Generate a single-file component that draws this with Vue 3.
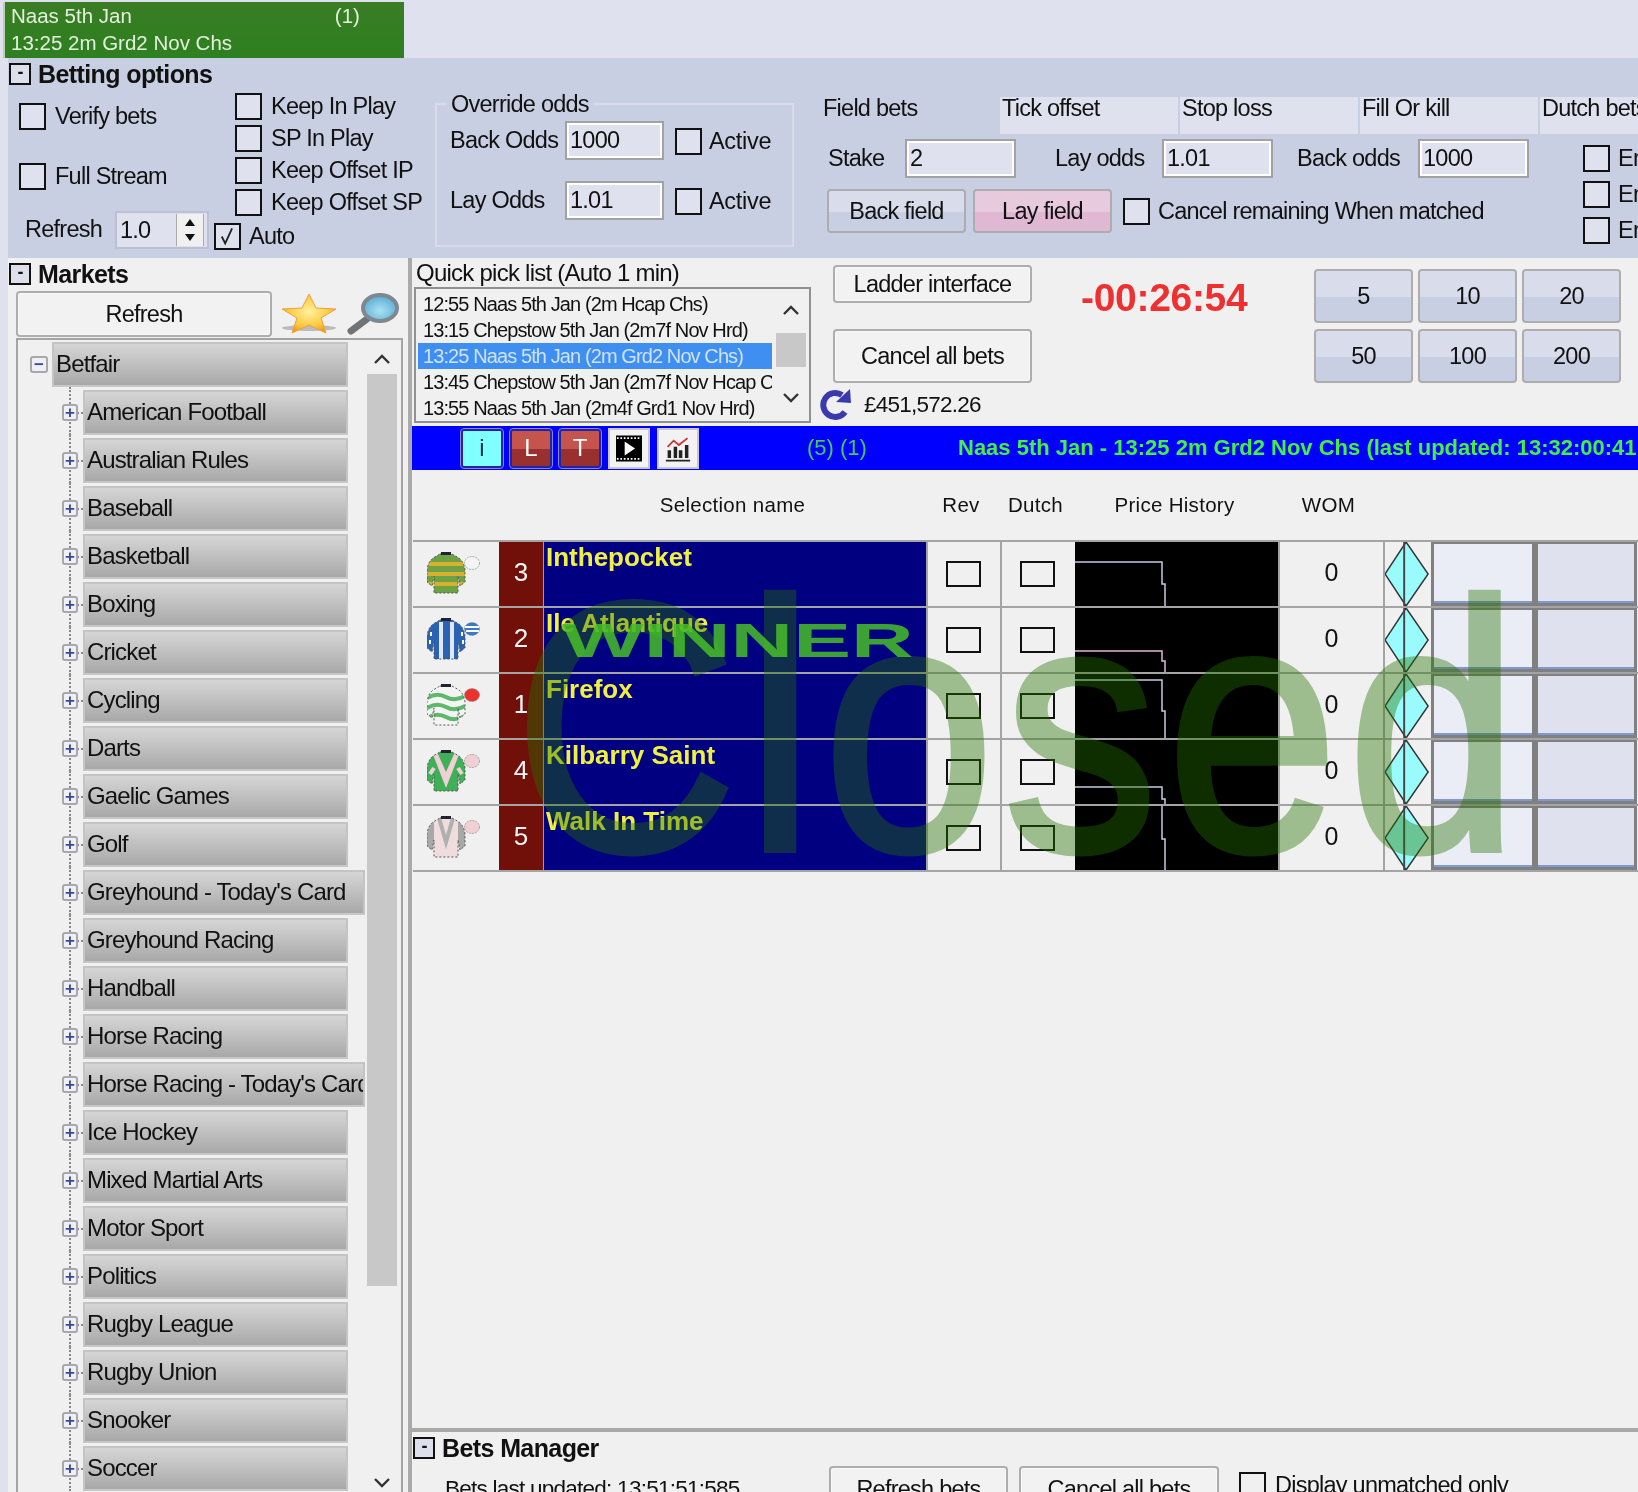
<template>
  <div class="page">
    <div class="tabstrip">
      <div class="market-tab">
        <div class="tab-line"><span>Naas 5th Jan</span><span class="tab-count">(1)</span></div>
        <div class="tab-line">13:25 2m Grd2 Nov Chs</div>
      </div>
    </div>

    <div class="main">
      <section class="options">
        <div class="sec-head"><span class="collapse">-</span><h2>Betting options</h2></div>
        <div class="opt-body">
          <div class="col-a">
            <label class="chk verify"><span class="box"></span>Verify bets</label>
            <label class="chk stream"><span class="box"></span>Full Stream</label>
            <div class="refresh-row">
              <span class="refresh-label">Refresh</span>
              <div class="spinner">
                <span>1.0</span>
                <div class="spin-btns"><i class="up"></i><i class="down"></i></div>
              </div>
              <label class="chk auto"><span class="box ticked">
                <svg viewBox="0 0 20 20"><path d="M5 10 L8 16 L14 3" fill="none" stroke="#222" stroke-width="1.6" /></svg>
              </span>Auto</label>
            </div>
          </div>
          <div class="col-b">
            <label v-for="k in keepOptions" :key="k" class="chk"><span class="box"></span>{{ k }}</label>
          </div>
          <fieldset class="override">
            <legend>Override odds</legend>
            <div class="odds-grid">
              <span>Back Odds</span><input class="field" value="1000" readonly />
              <label class="chk"><span class="box"></span>Active</label>
              <span>Lay Odds</span><input class="field" value="1.01" readonly />
              <label class="chk"><span class="box"></span>Active</label>
            </div>
          </fieldset>
          <div class="tabs-area">
            <div class="tab-heads">
              <span class="thead first">Field bets</span>
              <span v-for="t in fieldTabs" :key="t" class="thead">{{ t }}</span>
            </div>
            <div class="tab-body">
              <div class="field-form">
                <div class="stake-row">
                  <span class="l-stake">Stake</span><input class="field" value="2" readonly />
                  <span class="l-lay">Lay odds</span><input class="field" value="1.01" readonly />
                  <span class="l-back">Back odds</span><input class="field" value="1000" readonly />
                </div>
                <div class="field-btns">
                  <button class="btn blue">Back field</button>
                  <button class="btn pink">Lay field</button>
                  <label class="chk"><span class="box"></span>Cancel remaining When matched</label>
                </div>
              </div>
              <div class="en-col">
                <label v-for="n in 3" :key="n" class="chk"><span class="box"></span>Enable</label>
              </div>
            </div>
          </div>
        </div>
      </section>

      <div class="lower">
        <aside class="markets">
          <div class="sec-head"><span class="collapse">-</span><h2>Markets</h2></div>
          <div class="refresh-bar">
            <button class="btn refresh-btn">Refresh</button>
            <svg class="star" viewBox="0 0 58 42">
              <defs>
                <radialGradient id="starFill" cx="50%" cy="45%" r="55%">
                  <stop offset="0" stop-color="#fff2a0" />
                  <stop offset="0.7" stop-color="#fbc93c" />
                  <stop offset="1" stop-color="#f09a20" />
                </radialGradient>
              </defs>
              <ellipse cx="29" cy="35" rx="27" ry="3" fill="#bbb" />
              <path d="M29 1 L36 15 L56 16 L41 25 L46 40 L29 32 L12 40 L17 25 L2 16 L22 15 Z" fill="url(#starFill)" stroke="#f0a040" stroke-width="1" />
            </svg>
            <svg class="glass" viewBox="0 0 54 42">
              <defs>
                <radialGradient id="lens" cx="50%" cy="60%" r="60%">
                  <stop offset="0" stop-color="#a8e4f4" />
                  <stop offset="1" stop-color="#5ba8d0" />
                </radialGradient>
              </defs>
              <path d="M4 38 L20 26" stroke="#6e7478" stroke-width="7" stroke-linecap="round" />
              <ellipse cx="33" cy="15" rx="17" ry="13" fill="url(#lens)" stroke="#7d8890" stroke-width="4" />
            </svg>
          </div>
          <div class="tree">
            <div class="tree-list">
              <div class="tree-root">
                <span class="node-toggle root-toggle">−</span>
                <div class="tree-item">Betfair</div>
              </div>
              <div v-for="m in marketItems" :key="m" class="tree-row">
                <span class="node-toggle">+</span>
                <div class="tree-item" :class="{ wide: m.includes('Today') }">{{ m }}</div>
              </div>
            </div>
            <div class="tree-scroll">
              <svg class="chev" viewBox="0 0 16 10"><path d="M1 9 L8 2 L15 9" fill="none" stroke="#333" stroke-width="2.4" /></svg>
              <div class="tree-thumb"></div>
              <svg class="chev" viewBox="0 0 16 10"><path d="M1 1 L8 8 L15 1" fill="none" stroke="#333" stroke-width="2.4" /></svg>
            </div>
          </div>
        </aside>

        <div class="work">
          <div class="work-top">
            <div class="quick">
              <div class="quick-label">Quick pick list (Auto 1 min)</div>
              <div class="quick-box">
                <ul>
                  <li v-for="(q, i) in quickPicks" :key="q" :class="{ selected: i === 2 }">{{ q }}</li>
                </ul>
                <div class="quick-scroll">
                  <svg class="chev" viewBox="0 0 16 10"><path d="M1 9 L8 2 L15 9" fill="none" stroke="#333" stroke-width="2.4" /></svg>
                  <div class="quick-thumb"></div>
                  <svg class="chev" viewBox="0 0 16 10"><path d="M1 1 L8 8 L15 1" fill="none" stroke="#333" stroke-width="2.4" /></svg>
                </div>
              </div>
            </div>
            <div class="actions">
              <button class="btn ladder">Ladder interface</button>
              <button class="btn cancel">Cancel all bets</button>
              <div class="balance">
                <svg viewBox="0 0 32 32" class="reload">
                  <path d="M25 23 A12 12 0 1 1 22 6" fill="none" stroke="#3a3aac" stroke-width="6" />
                  <path d="M16 13 L31 14 L30 0 Z" fill="#3a3aac" />
                </svg>
                <span>£451,572.26</span>
              </div>
            </div>
            <div class="timer">-00:26:54</div>
            <div class="stakes">
              <button v-for="s in stakes" :key="s" class="btn blue">{{ s }}</button>
            </div>
          </div>

          <div class="blue-bar">
            <button class="tool info">i</button>
            <button class="tool red">L</button>
            <button class="tool red">T</button>
            <span class="tool-img">
              <svg viewBox="0 0 30 30">
                <rect width="30" height="30" fill="#000" />
                <path d="M1 3 H29 M1 27 H29" stroke="#fff" stroke-width="2" stroke-dasharray="2 2" />
                <path d="M10 7 L22 15 L10 23 Z" fill="#fff" />
              </svg>
            </span>
            <span class="tool-img">
              <svg viewBox="0 0 30 30">
                <path d="M3 13 L10 6 L16 11 L26 3" fill="none" stroke="#d03030" stroke-width="2" />
                <path d="M5 26 V17 M12 26 V13 M18 26 V17 M25 26 V11" stroke="#222" stroke-width="4" />
                <path d="M1 29 H29" stroke="#222" stroke-width="2" />
              </svg>
            </span>
            <span class="counts">(5) (1)</span>
            <span class="bar-title">Naas 5th Jan - 13:25 2m Grd2 Nov Chs (last updated: 13:32:00:41</span>
          </div>

          <div class="table-head grid-cols">
            <span></span><span></span>
            <span>Selection name</span><span>Rev</span><span>Dutch</span><span>Price History</span><span>WOM</span>
          </div>

          <div class="runners">
            <div v-for="(r, i) in runners" :key="r.name" class="runner grid-cols">
              <div class="silk">
                <svg viewBox="0 0 54 44">
                  <clipPath :id="'jacket' + i">
                    <path :d="jacketPath" />
                  </clipPath>
                  <path :d="jacketPath" :fill="r.base" />
                  <g :clip-path="'url(#jacket' + i + ')'">
                    <path v-for="(m, j) in r.marks" :key="j" :d="m.d" :fill="m.fill || 'none'" :stroke="m.stroke || 'none'" stroke-width="4" />
                  </g>
                  <path :d="jacketPath" fill="none" stroke="#555" stroke-width="1" stroke-dasharray="2 2" />
                  <path d="M14 0 H24 V3 H14 Z" fill="#223" />
                  <ellipse cx="45" cy="11" rx="7.5" ry="6.5" :fill="r.cap" stroke="#888" stroke-width="0.7" stroke-dasharray="2 1" />
                  <path v-if="r.capStripe" d="M38 9 H52 M39 13 H52" stroke="#fff" stroke-width="2" />
                </svg>
              </div>
              <div class="num">{{ r.num }}</div>
              <div class="name">{{ r.name }}</div>
              <div class="tick-cell line-l"><span class="mini-box"></span></div>
              <div class="tick-cell line-l"><span class="mini-box"></span></div>
              <div class="history">
                <svg viewBox="0 0 203 64" preserveAspectRatio="none">
                  <polyline :points="r.history" fill="none" :stroke="r.histColor" stroke-width="1.5" />
                </svg>
              </div>
              <div class="wom line-l">0</div>
              <div class="diamond line-l">
                <svg viewBox="0 0 48 64" preserveAspectRatio="none">
                  <polygon points="22,0 45,32 22,64 0,32" fill="#99fbfb" stroke="#333" stroke-width="1.5" />
                  <path d="M20 0 V64" stroke="#444" stroke-width="2" />
                </svg>
              </div>
              <div class="price a"></div>
              <div class="price b"></div>
            </div>
          </div>

          <div class="work-space"></div>

          <div class="bets">
            <div class="sec-head"><span class="collapse">-</span><h2>Bets Manager</h2></div>
            <div class="bets-row">
              <span class="updated">Bets last updated: 13:51:51:585</span>
              <button class="btn refresh-bets">Refresh bets</button>
              <button class="btn cancel-bets">Cancel all bets</button>
              <label class="chk display-only"><span class="box"></span>Display unmatched only</label>
            </div>
          </div>
        </div>
      </div>
    </div>

    <div class="stamp closed">Closed</div>
    <div class="stamp winner">WINNER</div>
  </div>
</template>

<script setup>
const keepOptions = ['Keep In Play', 'SP In Play', 'Keep Offset IP', 'Keep Offset SP']
const fieldTabs = ['Tick offset', 'Stop loss', 'Fill Or kill', 'Dutch bets']
const stakes = [5, 10, 20, 50, 100, 200]

const marketItems = [
  'American Football', 'Australian Rules', 'Baseball', 'Basketball', 'Boxing', 'Cricket',
  'Cycling', 'Darts', 'Gaelic Games', 'Golf', "Greyhound - Today's Card", 'Greyhound Racing',
  'Handball', 'Horse Racing', "Horse Racing - Today's Card", 'Ice Hockey', 'Mixed Martial Arts',
  'Motor Sport', 'Politics', 'Rugby League', 'Rugby Union', 'Snooker', 'Soccer',
]

const quickPicks = [
  '12:55 Naas 5th Jan (2m Hcap Chs)',
  '13:15 Chepstow 5th Jan (2m7f Nov Hrd)',
  '13:25 Naas 5th Jan (2m Grd2 Nov Chs)',
  '13:45 Chepstow 5th Jan (2m7f Nov Hcap Chs)',
  '13:55 Naas 5th Jan (2m4f Grd1 Nov Hrd)',
]

const jacketPath = 'M13 2 H25 L32 6 Q37 10 38 18 L38 30 L33 34 L31 24 L31 41 H7 L7 24 L5 34 L0 30 L0 18 Q1 10 6 6 Z'

const runners = [
  {
    num: 3, name: 'Inthepocket', base: '#6da244', cap: '#f4f4f4', histColor: '#c4cce4',
    history: '0,20 87,20 87,42 90,42 90,64',
    marks: [
      { d: 'M0 12 H38', stroke: '#d8b030' }, { d: 'M0 22 H38', stroke: '#d8b030' }, { d: 'M0 32 H38', stroke: '#d8b030' },
    ],
  },
  {
    num: 2, name: 'Ile Atlantique', base: '#2a62b4', cap: '#3a78c8', capStripe: true, histColor: '#e0b8d8',
    history: '0,43 87,43 87,53 90,53 90,64',
    marks: [
      { d: 'M14 4 V41', stroke: '#dfe8f4' }, { d: 'M25 4 V41', stroke: '#dfe8f4' },
      { d: 'M3 16 h2 M2 24 h2 M34 16 h2 M35 24 h2', stroke: '#fff' },
    ],
  },
  {
    num: 1, name: 'Firefox', base: '#f4f4f4', cap: '#e8342c', histColor: '#c4cce4',
    history: '0,6 87,6 87,37 90,37 90,64',
    marks: [
      { d: 'M0 14 Q10 8 19 13 T38 12', stroke: '#5cb86a' }, { d: 'M0 24 Q10 18 19 23 T38 22', stroke: '#5cb86a' }, { d: 'M0 34 Q10 28 19 33 T38 32', stroke: '#5cb86a' },
    ],
  },
  {
    num: 4, name: 'Kilbarry Saint', base: '#3fb058', cap: '#f0d0d4', histColor: '#c4cce4',
    history: '0,47 87,47 87,59 90,59 90,64',
    marks: [
      { d: 'M10 2 L19 22 L28 2 L33 2 L19 38 L5 2 Z', fill: '#f0d0d4' },
      { d: 'M3 24 L7 18', stroke: '#f0d0d4' }, { d: 'M35 24 L31 18', stroke: '#f0d0d4' },
    ],
  },
  {
    num: 5, name: 'Walk In Time', base: '#f0dcdc', cap: '#f0d0d4', histColor: '#c4cce4',
    history: '87,0 87,33 90,33 90,64',
    marks: [
      { d: 'M0 6 H7 V41 H0 Z M31 6 H38 V41 H31 Z', fill: '#a8a8a8' },
      { d: 'M12 2 L19 26 L26 2', stroke: '#b0b0b0' },
    ],
  },
]
</script>

<style scoped>
.page {
  position: relative;
  width: 1638px;
  height: 1492px;
  overflow: hidden;
  background: #dfe2ee;
  font-family: "Liberation Sans", Arial, sans-serif;
  font-size: 23.5px;
  letter-spacing: -0.75px;
  color: #111;
  filter: blur(0.45px);
}

.tabstrip {
  height: 58px;
  padding: 2px 0 0 3px;
  box-sizing: border-box;
}

.market-tab {
  width: 401px;
  height: 56px;
  box-sizing: border-box;
  padding: 0 0 0 6px;
  background: linear-gradient(#3a7c24, #2d8020);
  border-left: 2px solid #bcd0b0;
  color: #e4f0de;
  font-size: 20.5px;
  letter-spacing: 0;
}

.tab-line {
  display: flex;
  height: 27px;
  line-height: 27px;
}

.tab-count {
  margin-left: 203px;
}

.main {
  margin-left: 8px;
}

.sec-head {
  display: flex;
  align-items: center;
  gap: 7px;
  height: 32px;
  padding: 5px 0 5px 1px;
  box-sizing: border-box;
}

.sec-head h2 {
  margin: 0;
  font-size: 25px;
  font-weight: bold;
  letter-spacing: -0.6px;
}

.collapse {
  width: 22px;
  height: 22px;
  flex: none;
  box-sizing: border-box;
  border: 2px solid #111;
  background: #dde0ea;
  font-weight: bold;
  font-size: 18px;
  line-height: 15px;
  text-align: center;
}

.chk {
  display: flex;
  align-items: center;
  gap: 9px;
  white-space: nowrap;
}

.box {
  width: 27px;
  height: 27px;
  flex: none;
  box-sizing: border-box;
  border: 2px solid #111;
  background: #dfe2ee;
}

.ticked svg {
  display: block;
}

.field {
  height: 39px;
  box-sizing: border-box;
  padding: 0 3px;
  border: 2px solid #a2a2a2;
  box-shadow: inset 0 0 0 2px #fff;
  background: #dfe2ee;
  font: 23.5px "Liberation Sans", Arial, sans-serif;
  letter-spacing: -0.75px;
  color: #111;
  outline: none;
}

.btn {
  box-sizing: border-box;
  padding: 0;
  border: 2px solid #adadad;
  border-radius: 4px;
  background: #f2f2f2;
  box-shadow: inset 0 0 0 1px #fafafa;
  font: 23.5px "Liberation Sans", Arial, sans-serif;
  letter-spacing: -0.75px;
  color: #111;
}

.btn.blue {
  background: linear-gradient(#d9dcea 52%, #c9cfe2 52%);
  box-shadow: none;
}

.btn.pink {
  background: linear-gradient(#e8cade 52%, #e0b8d4 52%);
  box-shadow: none;
}

/* betting options */
.options {
  height: 200px;
  background: #c9cfe2;
}

.opt-body {
  display: flex;
  height: 168px;
}

.col-a {
  width: 227px;
  flex: none;
  padding-left: 11px;
  box-sizing: border-box;
}

.verify {
  margin-top: 13px;
}

.stream {
  margin-top: 33px;
}

.refresh-row {
  display: flex;
  align-items: flex-start;
  margin-top: 21px;
  padding-left: 6px;
  white-space: nowrap;
}

.refresh-label {
  width: 90px;
  flex: none;
  line-height: 36px;
}

.spinner {
  display: flex;
  align-items: center;
  justify-content: space-between;
  width: 94px;
  height: 38px;
  flex: none;
  box-sizing: border-box;
  padding: 0 3px 0 3px;
  border: 2px solid #bcc0d2;
  background: #dfe2ee;
}

.spin-btns {
  display: flex;
  flex-direction: column;
  width: 26px;
  height: 32px;
  border-left: 1px solid #aaa;
  border-right: 1px solid #aaa;
  background: #f0f0f0;
}

.spin-btns i {
  flex: 1;
  width: 0;
  margin: 4px auto;
  border-left: 5px solid transparent;
  border-right: 5px solid transparent;
}

.spin-btns .up {
  border-bottom: 7px solid #111;
}

.spin-btns .down {
  border-top: 7px solid #111;
}

.auto {
  margin: 12px 0 0 5px;
  gap: 8px;
}

.col-b {
  display: flex;
  flex-direction: column;
  gap: 5px;
  width: 200px;
  flex: none;
  padding-top: 3px;
  box-sizing: border-box;
}

.override {
  width: 359px;
  height: 155px;
  flex: none;
  margin: 2px 0 0;
  padding: 5px 0 0 13px;
  box-sizing: border-box;
  border: 2px solid #d8dbe8;
}

.override legend {
  margin-left: -3px;
  padding: 0 4px;
  line-height: 24px;
}

.odds-grid {
  display: grid;
  grid-template-columns: 115px 99px auto;
  row-gap: 21px;
  align-items: center;
  width: 342px;
}

.odds-grid .chk {
  gap: 7px;
  margin: 2px 0 0 11px;
  letter-spacing: -0.3px;
}

.tabs-area {
  flex: 1;
  margin-left: 10px;
  padding-top: 7px;
}

.tab-heads {
  display: flex;
  gap: 2px;
}

.thead {
  width: 176px;
  height: 37px;
  flex: none;
  padding-left: 2px;
  background: #dfe2ee;
  line-height: 23px;
}

.thead.first {
  width: 175px;
  padding-left: 19px;
  background: none;
}

.tab-body {
  display: flex;
}

.field-form {
  width: 779px;
  flex: none;
}

.stake-row {
  display: flex;
  align-items: center;
  margin-top: 5px;
}

.stake-row .field {
  width: 111px;
}

.l-stake {
  margin-left: 24px;
  width: 77px;
}

.l-lay {
  margin-left: 39px;
  width: 107px;
}

.l-back {
  margin-left: 24px;
  width: 121px;
}

.field-btns {
  display: flex;
  align-items: center;
  margin-top: 11px;
  padding-left: 23px;
  gap: 7px;
}

.field-btns .btn {
  width: 139px;
  height: 44px;
}

.field-btns .chk {
  margin-left: 4px;
  gap: 8px;
}

.en-col {
  display: flex;
  flex-direction: column;
  gap: 9px;
  padding-top: 11px;
}

.en-col .chk {
  gap: 8px;
}

/* lower split */
.lower {
  display: flex;
  height: 1234px;
  background: #f0f0f0;
}

.markets {
  width: 400px;
  flex: none;
}

.refresh-bar {
  display: flex;
  align-items: center;
  height: 48px;
  margin-left: 8px;
}

.refresh-btn {
  width: 256px;
  height: 46px;
}

.star {
  width: 58px;
  height: 42px;
  margin-left: 8px;
}

.glass {
  width: 54px;
  height: 42px;
  margin-left: 9px;
}

.tree {
  display: flex;
  width: 387px;
  height: 1160px;
  margin-left: 8px;
  box-sizing: border-box;
  border: 2px solid #a4a4a4;
  border-bottom: 0;
  overflow: hidden;
}

.tree-list {
  width: 349px;
  flex: none;
  padding-top: 2px;
}

.tree-root,
.tree-row {
  position: relative;
  display: flex;
  align-items: center;
  height: 45px;
  margin-bottom: 3px;
}

.tree-root {
  padding-left: 12px;
  gap: 4px;
}

.tree-row {
  padding-left: 44px;
  gap: 5px;
}

/* dotted connectors of the tree */
.tree-row::before {
  content: "";
  position: absolute;
  left: 51px;
  top: -3px;
  height: 48px;
  border-left: 2px dotted #888;
}

.tree-row::after {
  content: "";
  position: absolute;
  left: 59px;
  top: 22px;
  width: 6px;
  border-top: 2px dotted #888;
}

.node-toggle {
  position: relative;
  z-index: 1;
  width: 16px;
  height: 17px;
  flex: none;
  box-sizing: border-box;
  border: 2px solid #a8a8a8;
  border-radius: 3px;
  background: #eef0f6;
  color: #3a4a9c;
  font-size: 17px;
  font-weight: bold;
  line-height: 13px;
  text-align: center;
  letter-spacing: 0;
}

.root-toggle {
  width: 18px;
}

.tree-item {
  width: 265px;
  height: 45px;
  flex: none;
  box-sizing: border-box;
  padding-left: 2px;
  border: 2px solid #c4c4c4;
  border-bottom-color: #c8c8c8;
  background: linear-gradient(#d6d6d6, #a8a8a8);
  font-size: 24px;
  letter-spacing: -0.85px;
  line-height: 39px;
  white-space: nowrap;
  overflow: hidden;
}

.tree-root .tree-item {
  width: 296px;
}

.tree-item.wide {
  width: 282px;
}

.tree-scroll {
  display: flex;
  flex-direction: column;
  align-items: center;
  width: 30px;
  flex: none;
}

.tree-scroll .chev {
  flex: none;
  width: 16px;
  height: 10px;
  margin: 14px 0 10px;
}

.tree-thumb {
  width: 30px;
  height: 917px;
  margin-bottom: 178px;
  background: #c8c8c8;
}

.work {
  display: flex;
  flex-direction: column;
  flex: 1;
  border-left: 4px solid #aaa;
  min-width: 0;
  margin-left: 0;
  overflow: hidden;
}

.work-top {
  display: flex;
  height: 168px;
  flex: none;
}

.quick {
  width: 403px;
  flex: none;
}

.quick-label {
  height: 29px;
  padding-left: 4px;
  font-size: 24px;
  line-height: 29px;
}

.quick-box {
  display: flex;
  width: 397px;
  height: 136px;
  margin-left: 2px;
  box-sizing: border-box;
  border: 2px solid #909090;
  background: #f0f0f0;
}

.quick-box ul {
  width: 354px;
  flex: none;
  margin: 0;
  padding: 2px 0 0 2px;
  list-style: none;
  overflow: hidden;
}

.quick-box li {
  height: 26px;
  padding-left: 5px;
  font-size: 20px;
  letter-spacing: -0.9px;
  line-height: 26px;
  white-space: nowrap;
  overflow: hidden;
}

.quick-box li.selected {
  background: #3f8ff0;
  color: #cfe2fb;
}

.quick-scroll {
  display: flex;
  flex-direction: column;
  align-items: center;
  flex: 1;
}

.quick-scroll .chev {
  flex: none;
  width: 16px;
  height: 10px;
  margin: 16px 0;
}

.quick-thumb {
  width: 30px;
  height: 34px;
  margin: 2px 0 10px;
  background: #c8c8c8;
}

.actions {
  display: flex;
  flex-direction: column;
  width: 199px;
  flex: none;
  margin-left: 18px;
  padding-top: 7px;
}

.actions .btn {
  width: 199px;
}

.ladder {
  height: 38px;
}

.cancel {
  height: 54px;
  margin-top: 26px;
}

.balance {
  display: flex;
  align-items: center;
  gap: 12px;
  margin: 6px 0 0 -13px;
  white-space: nowrap;
  font-size: 22.5px;
}

.reload {
  width: 32px;
  height: 32px;
  flex: none;
}

.timer {
  width: 282px;
  flex: none;
  padding: 18px 0 0 49px;
  box-sizing: border-box;
  color: #ee3030;
  font-size: 39px;
  font-weight: bold;
  letter-spacing: -0.3px;
}

.stakes {
  display: grid;
  grid-template-columns: repeat(3, 99px);
  grid-auto-rows: 54px;
  gap: 6px 5px;
  padding-top: 11px;
}

.blue-bar {
  display: flex;
  align-items: center;
  height: 44px;
  flex: none;
  padding-left: 49px;
  background: #0000ff;
  white-space: nowrap;
}

.tool {
  width: 42px;
  height: 39px;
  flex: none;
  padding: 0;
  box-sizing: border-box;
  margin-right: 7px;
  border: 2px solid #2222aa;
  outline: 1px solid #8888cc;
  border-radius: 3px;
  font: 24px "Liberation Sans", Arial, sans-serif;
}

.tool.info {
  background: #80ffff;
  color: #0a3a4a;
}

.tool.red {
  background: linear-gradient(#c4544c 52%, #983030 52%);
  color: #fff;
}

.tool-img {
  display: block;
  width: 42px;
  height: 41px;
  flex: none;
  box-sizing: border-box;
  margin-right: 7px;
  padding: 5px 6px;
  background: #f2f2f2;
  border: 2px solid #c8c8c8;
}

.tool-img svg {
  display: block;
  width: 100%;
  height: 100%;
}

.counts {
  margin-left: 101px;
  width: 151px;
  flex: none;
  color: #46c85a;
  font-size: 22px;
  letter-spacing: 0;
}

.bar-title {
  color: #44f044;
  font-size: 22px;
  font-weight: bold;
  letter-spacing: 0;
}

.grid-cols {
  display: grid;
  grid-template-columns: 86px 44px 383px 74px 75px 203px 105px 48px 104px 102px;
}

.table-head {
  height: 70px;
  flex: none;
  margin-left: -1px;
  align-items: center;
  font-size: 20.5px;
  letter-spacing: 0.3px;
  text-align: center;
  white-space: nowrap;
}

.runners {
  flex: none;
  margin-left: 1px;
  border-bottom: 2px solid #a4a4a4;
}

.runner {
  height: 66px;
  box-sizing: border-box;
  border-top: 2px solid #a4a4a4;
}

.silk {
  display: flex;
  align-items: center;
  padding-left: 14px;
}

.silk svg {
  width: 54px;
  height: 44px;
}

.num {
  background: #701008;
  color: #f4f4f4;
  font-size: 26px;
  letter-spacing: 0;
  line-height: 60px;
  text-align: center;
}

.name {
  padding-left: 2px;
  background: #000080;
  color: #f0f040;
  font-size: 26px;
  font-weight: bold;
  letter-spacing: 0;
  line-height: 30px;
  border-left: 1px solid #9a9ab8;
}

.line-l {
  border-left: 2px solid #a4a4a4;
}

.tick-cell {
  display: flex;
  align-items: center;
  padding-left: 18px;
}

.mini-box {
  width: 35px;
  height: 26px;
  box-sizing: border-box;
  border: 2px solid #111;
}

.history {
  background: #000;
}

.history svg,
.diamond svg {
  display: block;
  width: 100%;
  height: 100%;
}

.wom {
  font-size: 25px;
  letter-spacing: 0;
  line-height: 60px;
  text-align: center;
  color: #111;
}

.price {
  box-sizing: border-box;
  border: 3px solid #808080;
  border-top-width: 2px;
  box-shadow: inset 0 -2px #7f9ad0;
}

.price.a {
  background: #eaedf6;
}

.price.b {
  background: #dfe2ee;
}

.work-space {
  flex: 1;
}

.bets {
  height: 64px;
  flex: none;
  border-top: 4px solid #a8a8a8;
  box-sizing: border-box;
}

.bets .sec-head {
  height: 34px;
  padding-top: 3px;
  padding-bottom: 5px;
  padding-left: 1px;
}

.bets-row {
  display: flex;
  align-items: center;
  height: 46px;
  padding-left: 33px;
  white-space: nowrap;
}

.updated {
  width: 384px;
  flex: none;
  font-size: 22.5px;
}

.refresh-bets {
  width: 179px;
  height: 46px;
  flex: none;
}

.cancel-bets {
  width: 200px;
  height: 46px;
  flex: none;
  margin-left: 11px;
}

.display-only {
  margin: 0 0 8px 20px;
}

.display-only .box {
  background: #f0f0f0;
}

/* stamps painted across the grid */
.stamp {
  position: absolute;
  pointer-events: none;
  white-space: nowrap;
  line-height: 1;
  letter-spacing: 0;
  transform-origin: left top;
}

.closed {
  left: 514px;
  top: 550px;
  font-size: 355px;
  letter-spacing: 10px;
  color: rgb(37, 115, 0);
  -webkit-text-stroke: 6px rgb(37, 115, 0);
  opacity: 0.4;
  transform: scaleX(0.87);
}

.winner {
  left: 562px;
  top: 616px;
  font-size: 49px;
  font-weight: bold;
  color: rgba(70, 190, 40, 0.85);
  transform: scaleX(1.77);
}
</style>

<style>
html,
body {
  margin: 0;
  background: #dfe2ee;
}
</style>
